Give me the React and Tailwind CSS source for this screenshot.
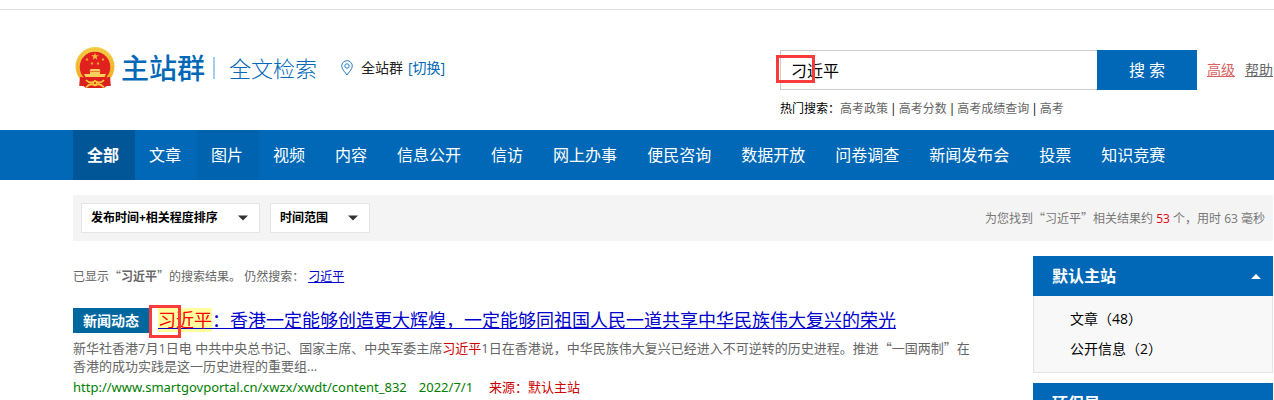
import { useState } from 'react';

const navItems = ['全部', '文章', '图片', '视频', '内容', '信息公开', '信访', '网上办事', '便民咨询', '数据开放', '问卷调查', '新闻发布会', '投票', '知识竞赛'];
const hotWords = ['高考政策', '高考分数', '高考成绩查询', '高考'];

const Emblem = () => (
  <svg viewBox="0 0 40 42" className="w-10 h-[42px] shrink-0" aria-hidden="true">
    <defs>
      <linearGradient id="gold" x1="0" y1="0" x2="0" y2="1">
        <stop offset="0" stopColor="#f7cf4b" />
        <stop offset="1" stopColor="#f0a81c" />
      </linearGradient>
    </defs>
    <path d="M5 29 L4.500 39 Q8 38 11 41 L29 41 Q32 38 35.500 39 L35 29 Z" fill="#d9201c" />
    <circle cx="20" cy="19.500" r="19.500" fill="url(#gold)" />
    <circle cx="20" cy="19.500" r="17.500" fill="none" stroke="#e8a828" strokeWidth="0.600" strokeDasharray="2 1.500" />
    <circle cx="20" cy="20" r="15.300" fill="#e0211d" />
    <path d="M20 5.500 L20.900 8.300 H23.800 L21.500 10 L22.300 12.700 L20 11.100 L17.700 12.700 L18.500 10 L16.200 8.300 H19.100 Z" fill="#fbb93a" />
    <g fill="#f49a35">
      <circle cx="12" cy="12.500" r="1.200" />
      <circle cx="28" cy="12.500" r="1.200" />
      <circle cx="17" cy="16.500" r="1.200" />
      <circle cx="23" cy="16.500" r="1.200" />
    </g>
    <path d="M15.500 22 H24.500 L25.500 24.500 H14.500 Z M15 25 H25 V27 H15 Z M9 27 H31 L29.500 30 H10.500 Z" fill="#fad05a" />
    <path d="M5 30 Q12 30 17 34 L20 32 L23 34 Q28 30 35 30 L35.500 39 Q31 37.500 28 41 H12 Q9 37.500 4.500 39 Z" fill="#d9201c" />
    <path d="M11 33 Q15 37.500 20 34 Q25 37.500 29 33 M11 40.500 Q15 35.500 20 38.500 Q25 35.500 29 40.500" fill="none" stroke="#fac63c" strokeWidth="1.800" />
    <circle cx="20" cy="36" r="2.500" fill="#fac63c" />
    <circle cx="20" cy="36" r="1" fill="#d9201c" />
  </svg>
);

const PinIcon = () => (
  <svg viewBox="0 0 12 16" className="w-3 h-4" fill="none" stroke="#2a7fc4" aria-hidden="true">
    <path d="M6 15 C4.500 12.500 0.700 9.500 0.700 6 A5.300 5.300 0 0 1 11.300 6 C11.300 9.500 7.500 12.500 6 15 Z" />
    <circle cx="6" cy="6" r="2.200" />
  </svg>
);

const Quoted = ({ children }) => (
  <span>
    <span className="font-['Noto_Sans_CJK_SC',sans-serif]">“</span>
    {children}
    <span className="font-['Noto_Sans_CJK_SC',sans-serif]">”</span>
  </span>
);

const FilterSelect = ({ label, options, className }) => (
  <label className={`relative block h-[30px] ${className}`}>
    <select
      aria-label={label}
      className="appearance-none w-full h-full pl-[9px] pr-6 bg-white border border-[#e5e5e5] text-xs font-bold text-black"
    >
      {options.map((option) => (
        <option key={option}>{option}</option>
      ))}
    </select>
    <svg viewBox="0 0 10 5" className="absolute right-3 top-3 w-[10px] h-[6px] pointer-events-none" aria-hidden="true">
      <path d="M0 0 H10 L5 5 Z" fill="#333" />
    </svg>
  </label>
);

const SiteGroup = ({ title, items }) => {
  const [open, setOpen] = useState(true);

  return (
    <section className="mb-[10px]">
      <button
        type="button"
        onClick={() => setOpen(!open)}
        className="flex items-center justify-between w-full h-10 pl-[19px] pr-3 bg-[#0068b7] text-white text-base font-bold"
      >
        {title}
        <svg viewBox="0 0 10 5" className="w-[10px] h-[5px]" aria-hidden="true">
          <path d="M0 5 H10 L5 0 Z" fill="#fff" />
        </svg>
      </button>
      {open && items.length > 0 && (
        <ul className="py-2 pl-9 bg-[#f8f8f8] border border-t-0 border-[#e5e5e5] text-sm leading-[30px]">
          {items.map((item) => (
            <li key={item.name}>
              <a href="#" className="text-black">{item.name}（{item.count}）</a>
            </li>
          ))}
        </ul>
      )}
    </section>
  );
};

const App = () => {
  const [query, setQuery] = useState('刁近平');

  return (
    <div lang="zh-CN" className="h-screen overflow-hidden bg-white text-black font-['Open_Sans','Noto_Sans_CJK_SC',sans-serif]">
      <header className="mt-[9px] pt-10 pb-3 pl-[73px] pr-px border-t border-[#ddd] flex items-start justify-between">
        <div className="flex items-center h-9 pl-0.5">
          <Emblem />
          <h1 className="ml-[6px] text-[28px] leading-9 font-medium text-[#0068b7]">主站群</h1>
          <span className="ml-2 w-0.5 h-[22px] bg-[#a5cdec]" />
          <span className="ml-[14px] text-[22px] leading-9 font-light text-[#0068b7]">全文检索</span>
          <div className="ml-6 flex items-center text-sm">
            <PinIcon />
            <span className="ml-2 text-[#222]">全站群</span>
            <a href="#" className="ml-[5px] text-[#0068b7]">[切换]</a>
          </div>
        </div>

        <div className="flex items-start">
          <form onSubmit={(e) => e.preventDefault()}>
            <div className="relative flex">
              <input
                type="text"
                aria-label="搜索"
                value={query}
                onChange={(e) => setQuery(e.target.value)}
                className="w-[317px] h-10 px-[10px] border border-r-0 border-[#ccc] text-base outline-none"
              />
              <button type="submit" className="w-[100px] h-10 bg-[#0068b7] text-white text-base">搜 索</button>
              <span className="absolute -left-1 top-[5px] w-[39px] h-[28px] border-3 border-[#f93b3b] pointer-events-none" />
            </div>
            <div className="mt-[9px] flex text-xs leading-[19px]">
              热门搜索：
              {hotWords.map((word, i) => (
                <span key={word}>
                  {i > 0 && <span className="mx-0.5">|</span>}
                  <a href="#" className="text-[#666]">{word}</a>
                </span>
              ))}
            </div>
          </form>
          <div className="flex gap-[10px] ml-[10px] text-sm leading-10">
            <a href="#" className="underline text-[#d9605f]">高级</a>
            <a href="#" className="underline text-[#666]">帮助</a>
          </div>
        </div>
      </header>

      <nav className="pl-[73px] bg-[#0068b7]">
        <ul className="flex text-base leading-[50px] text-white">
          {navItems.map((item, i) => (
            <li key={item} className={i === 0 ? 'bg-[#005697] font-bold' : i === 2 ? 'bg-[#0063af]' : ''}>
              <a href="#" className="block pl-[14px] pr-4">{item}</a>
            </li>
          ))}
        </ul>
      </nav>

      <div className="pl-[73px] pr-px">
        <div className="mt-[15px] p-2 bg-[#f4f4f4] flex items-center gap-[10px]">
          <FilterSelect label="排序" options={['发布时间+相关程度排序', '发布时间', '相关程度']} className="w-[179px]" />
          <FilterSelect label="时间" options={['时间范围', '一周内', '一月内', '一年内']} className="w-[100px]" />
          <p className="ml-auto text-xs text-[#777]">
            为您找到<Quoted>习近平</Quoted>相关结果约 <span className="text-[#e60012]">53</span> 个，用时 63 毫秒
          </p>
        </div>

        <div className="flex gap-[60px] mt-[15px]">
          <main className="flex-1 min-w-0">
            <p className="pt-[10px] text-xs leading-5 text-[#666]">
              已显示<Quoted><b>习近平</b></Quoted>的搜索结果。 仍然搜索：
              <a href="#" className="ml-1 underline text-[#0000cc]">刁近平</a>
            </p>

            <article className="mt-[21px]">
              <div className="relative flex items-center h-[25px]">
                <span className="px-[10px] bg-[#00689f] text-white text-sm leading-[25px] font-bold">新闻动态</span>
                <h2 className="ml-[9px] text-lg leading-[25px]">
                  <a href="#" className="underline text-[#0000cc]">
                    <em className="not-italic bg-[#ffffa0] text-[#f00]">习近平</em>：香港一定能够创造更大辉煌，一定能够同祖国人民一道共享中华民族伟大复兴的荣光
                  </a>
                </h2>
                <span className="absolute left-[76px] -top-[3px] w-8 h-[33px] border-3 border-[#f93b3b] pointer-events-none" />
              </div>
              <p className="mt-[6px] text-[13px] leading-[18px] text-[#666]">
                新华社香港7月1日电 中共中央总书记、国家主席、中央军委主席<span className="text-[#c00]">习近平</span>1日在香港说，中华民族伟大复兴已经进入不可逆转的历史进程。推进<Quoted>一国两制</Quoted>在香港的成功实践是这一历史进程的重要组...
              </p>
              <p className="mt-[2px] text-[13px] leading-5 text-[#008000] font-['Noto_Sans','Noto_Sans_CJK_SC',sans-serif]">
                <a href="#">http://www.smartgovportal.cn/xwzx/xwdt/content_832</a>
                <span className="ml-3">2022/7/1</span>
                <span className="ml-4 text-[#c00]">来源：默认主站</span>
              </p>
            </article>
          </main>

          <aside className="w-[240px] shrink-0">
            <SiteGroup title="默认主站" items={[{ name: '文章', count: 48 }, { name: '公开信息', count: 2 }]} />
            <SiteGroup title="环保局" items={[]} />
          </aside>
        </div>
      </div>
    </div>
  );
};

export default App;
